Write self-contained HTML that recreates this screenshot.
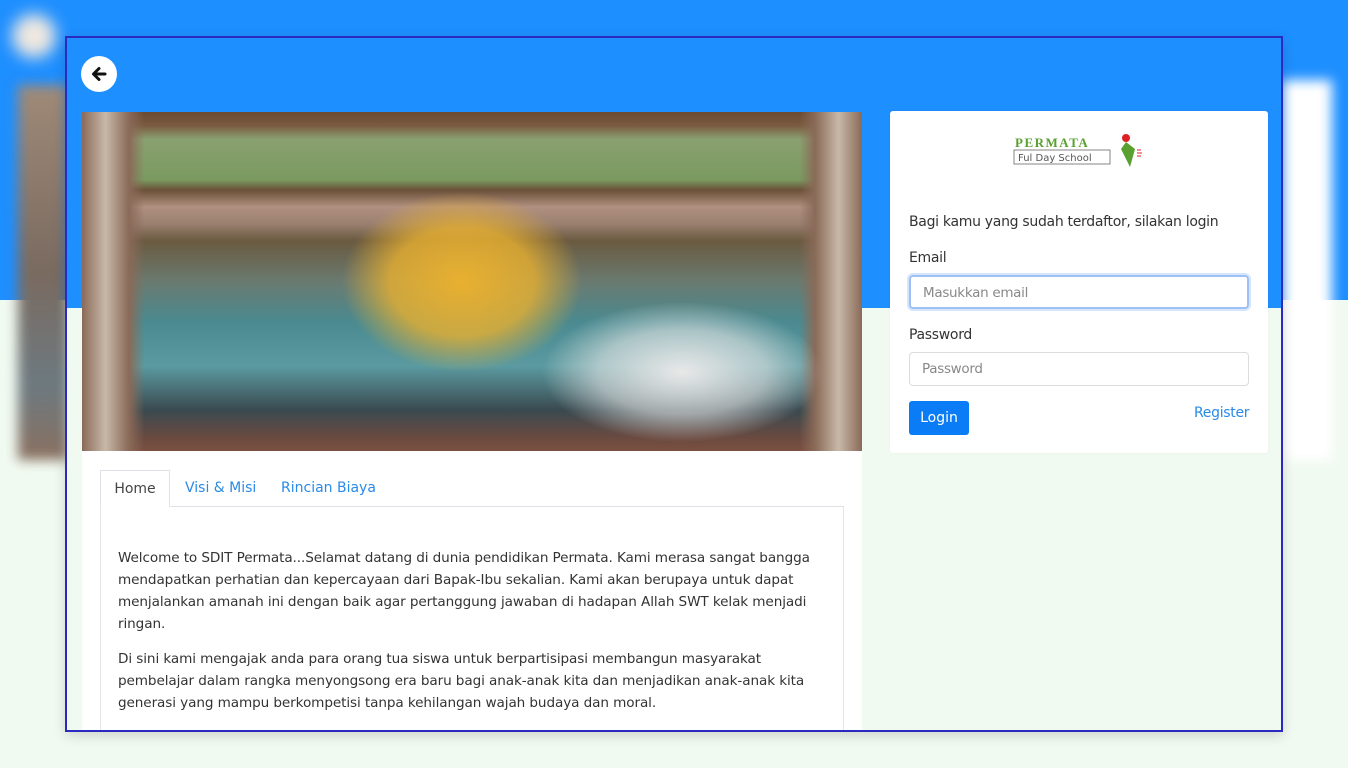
<!DOCTYPE html>
<html><head><meta charset="utf-8"><style>
*{box-sizing:border-box;margin:0;padding:0}
body{width:1348px;height:768px;overflow:hidden;font-family:"Liberation Sans",sans-serif;background:#f1faf1;position:relative}
.bgtop{position:absolute;left:0;top:0;width:1348px;height:300px;background:#1e8fff}
.blurcard{position:absolute;left:1282px;top:80px;width:50px;height:380px;background:#fff;filter:blur(6px)}
.blurimg{position:absolute;left:18px;top:85px;width:50px;height:375px;background:linear-gradient(#a08a78,#7a6a60 50%,#6d7a80 80%,#8a7060);filter:blur(6px)}
.glow{position:absolute;left:12px;top:14px;width:44px;height:44px;border-radius:50%;background:#f0e8e0;filter:blur(8px)}
.modal{position:absolute;left:65px;top:36px;width:1218px;height:696px;border:2px solid #2a2ac0;background:#f1faf1;overflow:hidden;box-shadow:0 4px 12px rgba(0,0,0,.15)}
.mtop{position:absolute;left:0;top:0;width:100%;height:270px;background:#1e8fff}
.back{position:absolute;left:14px;top:18px;width:36px;height:36px;border-radius:50%;background:#fff}
.left{position:absolute;left:15px;top:74px;width:780px;height:620px;background:#fff}
.photo{position:absolute;left:0;top:0;width:780px;height:339px;
background:
radial-gradient(ellipse 120px 90px at 380px 170px,#e8b030 0,rgba(232,176,48,.8) 60%,transparent 100%),
radial-gradient(ellipse 140px 70px at 600px 260px,#e8e8e8 0,rgba(230,230,230,.6) 60%,transparent 100%),
linear-gradient(90deg,#8a6a58 0,#c8b8a8 3%,#8a6a58 6%,transparent 8%,transparent 92%,#8a6a58 94%,#c8b8a8 97%,#8a6a58 100%),
linear-gradient(#6a4a30 0,#7a5a40 4%,#8aa070 8%,#7a9a60 20%,#6a5038 23%,#b09080 28%,#9a8070 33%,#6a5a40 38%,#6a7a70 50%,#4a8a90 62%,#5a9aa0 75%,#3a4a50 88%,#6a4a40 96%,#7a5040 100%)}
.tabs{position:absolute;left:18px;top:358px;height:37px;width:744px;border-bottom:1px solid #dee2e6;font-family:"DejaVu Sans",sans-serif;font-size:14px}
.tab{position:absolute;top:0;height:37px;line-height:36px;color:#2a8ae8}
.tab.act{left:0;width:70px;border:1px solid #dee2e6;border-bottom:1px solid #fff;background:#fff;color:#444;text-align:center}
.content{position:absolute;left:18px;top:395px;width:744px;height:300px;border:1px solid #e6e6e6;border-top:none;padding:40px 17px;font-family:"DejaVu Sans",sans-serif;font-size:13.6px;color:#333;line-height:22px;letter-spacing:-.1px}
.content p{margin-bottom:13px}
.right{position:absolute;left:823px;top:73px;width:378px;height:342px;background:#fff;border-radius:3px;box-shadow:0 0 3px rgba(0,0,0,.05)}
.logo{position:absolute;left:123px;top:22px;width:135px;height:40px}
.r{font-family:"DejaVu Sans",sans-serif;font-size:14px;color:#333;position:absolute;left:19px;letter-spacing:-.3px}
.inp{position:absolute;left:19px;width:340px;height:34px;border:1px solid #dcdcdc;border-radius:4px;padding-left:12px;line-height:32px;color:#888;font-family:"DejaVu Sans",sans-serif;font-size:13.5px;letter-spacing:-.3px}
.btn{position:absolute;left:19px;top:290px;width:60px;height:34px;border-radius:3px;background:#0a7cf5;color:#fff;text-align:center;line-height:34px;font-family:"DejaVu Sans",sans-serif;font-size:14px}
</style></head><body>
<div class="bgtop"></div><div class="glow"></div><div class="blurimg"></div><div class="blurcard"></div>
<div class="modal">
 <div class="mtop"></div>
 <div class="back"><svg width="36" height="36" viewBox="0 0 36 36"><path d="M24 18H13M18 12.5L12.5 18L18 23.5" stroke="#111" stroke-width="3" fill="none" stroke-linecap="round" stroke-linejoin="round"/></svg></div>
 <div class="left">
  <div class="photo"></div>
  <div class="tabs"><div class="tab act">Home</div><div class="tab" style="left:85px">Visi &amp; Misi</div><div class="tab" style="left:181px">Rincian Biaya</div></div>
  <div class="content">
   <p>Welcome to SDIT Permata...Selamat datang di dunia pendidikan Permata. Kami merasa sangat bangga mendapatkan perhatian dan kepercayaan dari Bapak-Ibu sekalian. Kami akan berupaya untuk dapat menjalankan amanah ini dengan baik agar pertanggung jawaban di hadapan Allah SWT kelak menjadi ringan.</p>
   <p>Di sini kami mengajak anda para orang tua siswa untuk berpartisipasi membangun masyarakat<br>pembelajar dalam rangka menyongsong era baru bagi anak-anak kita dan menjadikan anak-anak kita generasi yang mampu berkompetisi tanpa kehilangan wajah budaya dan moral.</p>
  </div>
 </div>
 <div class="right">
  <svg class="logo" viewBox="0 0 135 40">
   <text x="2" y="14" font-family="Liberation Serif,serif" font-weight="bold" font-size="13" fill="#5aa030" letter-spacing="1.5">PERMATA</text>
   <rect x="1" y="17" width="96" height="14" fill="none" stroke="#666" stroke-width="0.8"/>
   <text x="5" y="28" font-family="DejaVu Sans,sans-serif" font-size="10" fill="#555">Ful Day School</text>
   <circle cx="113" cy="5" r="4" fill="#e02020"/>
   <polygon points="113,9 122,16 117,34 108,16" fill="#5aa030"/>
   <path d="M124 17h4M124 20h5M124 23h4" stroke="#e02020" stroke-width="1"/>
  </svg>
  <div class="r" style="top:103px">Bagi kamu yang sudah terdaftor, silakan login</div>
  <div class="r" style="top:139px">Email</div>
  <div class="inp" style="top:164px;border:2px solid #9dc0f5;box-shadow:0 0 0 2px #d6e6fd">Masukkan email</div>
  <div class="r" style="top:216px">Password</div>
  <div class="inp" style="top:241px">Password</div>
  <div class="btn">Login</div>
  <div class="r" style="left:304px;top:294px;color:#2a8ae8">Register</div>
 </div>
</div>
</body></html>
